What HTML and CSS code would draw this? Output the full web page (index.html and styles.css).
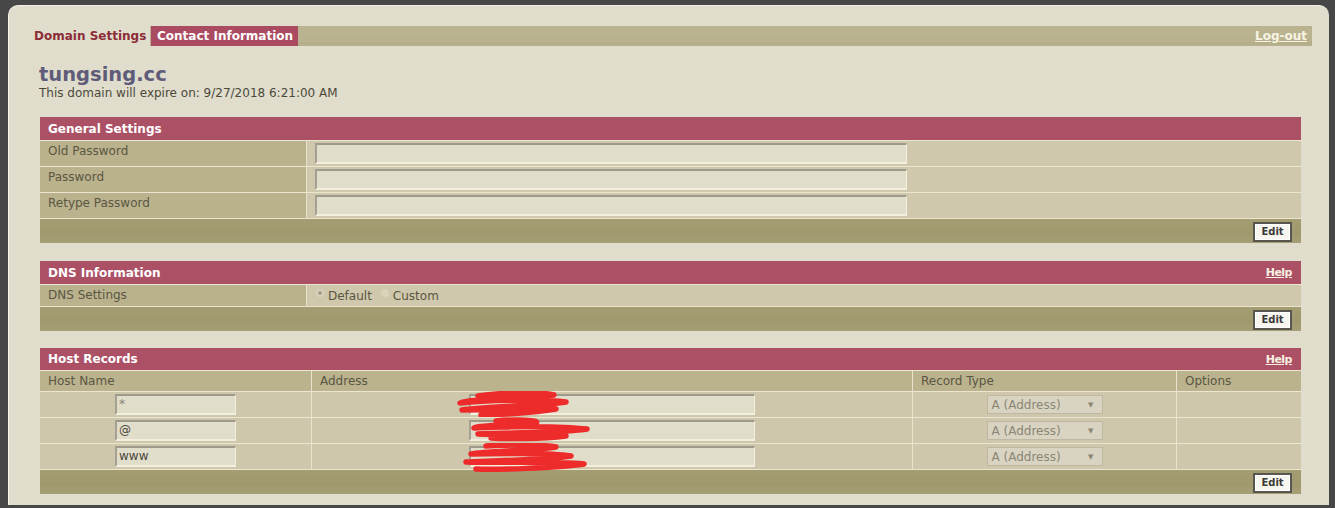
FILE: index.html
```html
<!DOCTYPE html>
<html>
<head>
<meta charset="utf-8">
<title>Domain Settings</title>
<link rel="stylesheet" href="styles.css">
</head>
<body>
<div class="page">
  <div class="tabbar">
    <span class="tab tab-active">Domain Settings</span>
    <span class="tab tab-pink">Contact Information</span>
    <a class="logout" href="#">Log-out</a>
  </div>

  <div class="domain">
    <div class="domain-name">tungsing.cc</div>
    <div class="domain-expire">This domain will expire on: 9/27/2018 6:21:00 AM</div>
  </div>

  <div class="section section-general">
    <div class="sec-head"><span>General Settings</span></div>
    <div class="form-row">
      <div class="label">Old Password</div>
      <div class="value"><span class="input input-wide"></span></div>
    </div>
    <div class="form-row">
      <div class="label">Password</div>
      <div class="value"><span class="input input-wide"></span></div>
    </div>
    <div class="form-row">
      <div class="label">Retype Password</div>
      <div class="value"><span class="input input-wide"></span></div>
    </div>
    <div class="sec-foot"><button class="btn">Edit</button></div>
  </div>

  <div class="section section-dns">
    <div class="sec-head"><span>DNS Information</span><a class="help" href="#">Help</a></div>
    <div class="form-row form-row-short">
      <div class="label">DNS Settings</div>
      <div class="value value-radio">
        <span class="radio radio-on"></span><span class="radio-label">Default</span>
        <span class="radio"></span><span class="radio-label">Custom</span>
      </div>
    </div>
    <div class="sec-foot"><button class="btn">Edit</button></div>
  </div>

  <div class="section section-hosts">
    <div class="sec-head"><span>Host Records</span><a class="help" href="#">Help</a></div>
    <div class="host-grid">
      <div class="hcell hhead">Host Name</div>
      <div class="hcell hhead">Address</div>
      <div class="hcell hhead">Record Type</div>
      <div class="hcell hhead">Options</div>

      <div class="hcell hdata"><span class="input input-host input-star">*</span></div>
      <div class="hcell hdata addr">
        <span class="input input-addr"></span>
        <svg class="scribble" width="140" height="30" viewBox="0 0 140 30">
          <path d="M22 5 C50 1 85 1 98 4 C70 7 20 7 4 12 C30 9 90 8 110 11 C85 15 30 15 6 19 C40 18 80 18 100 18 C75 22 40 24 25 24" fill="none" stroke="#ee2b2b" stroke-width="5.5" stroke-linecap="round" stroke-linejoin="round"/>
        </svg>
      </div>
      <div class="hcell hdata"><div class="select"><span>A (Address)</span><span class="arrow">▼</span></div></div>
      <div class="hcell hdata"></div>

      <div class="hcell hdata"><span class="input input-host">@</span></div>
      <div class="hcell hdata addr">
        <span class="input input-addr"></span>
        <svg class="scribble" width="140" height="30" viewBox="0 0 140 30">
          <path d="M40 4 C60 2 85 3 80 6 C55 8 25 8 18 11 C50 9 105 9 131 12 C105 16 50 16 22 17 C55 18 100 17 110 19 C85 22 50 22 35 21" fill="none" stroke="#ee2b2b" stroke-width="5.5" stroke-linecap="round" stroke-linejoin="round"/>
        </svg>
      </div>
      <div class="hcell hdata"><div class="select"><span>A (Address)</span><span class="arrow">▼</span></div></div>
      <div class="hcell hdata"></div>

      <div class="hcell hdata"><span class="input input-host">www</span></div>
      <div class="hcell hdata addr">
        <span class="input input-addr"></span>
        <svg class="scribble" width="140" height="30" viewBox="0 0 140 30">
          <path d="M30 3 C55 1 90 2 100 4 C75 8 30 8 15 11 C45 10 95 10 115 13 C90 17 30 18 10 19 C50 20 100 18 128 21 C100 25 40 27 20 26" fill="none" stroke="#ee2b2b" stroke-width="5.5" stroke-linecap="round" stroke-linejoin="round"/>
        </svg>
      </div>
      <div class="hcell hdata"><div class="select"><span>A (Address)</span><span class="arrow">▼</span></div></div>
      <div class="hcell hdata"></div>
    </div>
    <div class="sec-foot"><button class="btn">Edit</button></div>
  </div>
</div>
</body>
</html>
```

FILE: styles.css
```css
html, body {
  margin: 0;
  padding: 0;
}
body {
  background: #474747;
  font-family: "DejaVu Sans", Verdana, sans-serif;
  font-size: 12px;
  color: #5a5642;
  padding-top: 5px;
  height: 508px;
  box-sizing: border-box;
  overflow: hidden;
}
.page {
  margin: 0 6px 0 8px;
  height: 500px;
  box-sizing: border-box;
  background: #e0ddcc;
  border-top: 1px solid #f3f1e6;
  border-left: 1px solid #f6f4ea;
  border-radius: 10px 10px 0 0;
  padding: 20px 17px 0 19px;
  overflow: hidden;
}

/* tab bar */
.tabbar {
  display: flex;
  align-items: stretch;
  height: 20px;
  background: linear-gradient(#bab38f 0, #bab38f 13px, #b4ad89 14px, #bcb592 15px, #b3ac88 17px, #b8b18d 20px);
}
.tab {
  display: flex;
  align-items: center;
  font-weight: bold;
  font-size: 12px;
  line-height: 14px;
}
.tab-active {
  width: 116px;
  padding-left: 6px;
  background: #e0ddcc;
  color: #8b2c37;
}
.tab-pink {
  margin-left: 1px;
  width: 141px;
  padding-left: 6px;
  background: #ab4b62;
  color: #ffffff;
}
.logout {
  margin-left: auto;
  padding-right: 5px;
  align-self: center;
  font-weight: bold;
  font-size: 12px;
  color: #f7f3e2;
  text-decoration: underline;
}

/* domain heading */
.domain {
  margin-left: 11px;
  margin-top: 18px;
}
.domain-name {
  font-weight: bold;
  font-size: 19.5px;
  line-height: 22px;
  color: #5f5c7a;
}
.domain-expire {
  line-height: 14px;
  color: #4c493b;
}

/* sections */
.section {
  margin: 0 11px 0 12px;
}
.section-general { margin-top: 17px; }
.section-dns { margin-top: 18px; }
.section-hosts { margin-top: 17px; }

.sec-head {
  display: flex;
  align-items: center;
  justify-content: space-between;
  height: 23px;
  padding: 0 9px 0 8px;
  background: #ac5066;
  color: #ffffff;
  font-weight: bold;
  font-size: 12px;
}
.section-hosts .sec-head { height: 22px; }
.help {
  color: #f7f0e2;
  text-decoration: underline;
  font-weight: bold;
  font-size: 11px;
  letter-spacing: -0.5px;
}

.form-row {
  display: grid;
  grid-template-columns: 267px 1fr;
  height: 26px;
  box-sizing: border-box;
  border-top: 1px solid #ebe6cf;
}
.form-row-short { height: 22px; }
.label {
  background: #bab28d;
  border-right: 1px solid #e6e1c8;
  padding: 3px 0 0 8px;
  line-height: 15px;
}
.value {
  background: #cfc8ad;
  padding: 2px 0 0 8px;
}
.value-radio {
  display: flex;
  align-items: center;
  padding: 0 0 0 9px;
  color: #5a5642;
  font-size: 12px;
}
.radio {
  width: 8px;
  height: 8px;
  border-radius: 50%;
  background: #d9d3bb;
  margin-top: -5px;
  display: flex;
  align-items: center;
  justify-content: center;
}
.radio-on::after {
  content: "";
  width: 4px;
  height: 4px;
  border-radius: 50%;
  background: #a39e8c;
}
.radio-label {
  margin: 0 9px 0 4px;
}

.input {
  display: block;
  box-sizing: border-box;
  height: 21px;
  background: #e1ddcb;
  border-top: 2px solid #9d9a8b;
  border-left: 2px solid #a4a192;
  border-right: 1px solid #f3efdf;
  border-bottom: 2px solid #f3efdf;
  font-size: 12px;
  line-height: 16px;
  padding-left: 1px;
  color: #4b483d;
}
.input-wide { width: 592px; }

.sec-foot {
  display: flex;
  justify-content: flex-end;
  align-items: center;
  height: 25px;
  box-sizing: border-box;
  border-top: 1px solid #ebe6cf;
  background: linear-gradient(#a59d72, #a1996e 60%, #a69e75);
  padding: 1px 9px 0 0;
}
.btn {
  width: 39px;
  height: 20px;
  box-sizing: border-box;
  padding: 0;
  background: #f6f5ef;
  border: 2px solid #58574f;
  box-shadow: inset 0 0 0 1px #ffffff;
  font-family: "DejaVu Sans", Verdana, sans-serif;
  font-weight: bold;
  font-size: 10px;
  color: #3a3a36;
}

/* host records */
.host-grid {
  display: grid;
  grid-template-columns: 272px 601px 264px 1fr;
}
.hcell {
  box-sizing: border-box;
  border-top: 1px solid #ebe6cf;
  border-right: 1px solid #e8e3ca;
}
.hcell:nth-child(4n) { border-right: none; }
.hhead {
  height: 21px;
  background: #bbb38e;
  padding: 3px 0 0 8px;
  line-height: 14px;
  font-size: 12px;
}
.hdata {
  height: 26px;
  background: #cec7ac;
  display: flex;
  justify-content: center;
  padding-top: 2px;
}
.input-host {
  width: 121px;
  padding-left: 2px;
}
.input-star { color: #8a8676; }
.input-addr { width: 286px; }
.addr { position: relative; }
.scribble {
  position: absolute;
  left: 144px;
  top: -1px;
}
.select {
  box-sizing: border-box;
  width: 116px;
  height: 19px;
  margin-top: 1px;
  border: 1px solid #beb8a2;
  background: #d9d4c1;
  color: #8a8676;
  font-size: 12px;
  display: flex;
  align-items: center;
  justify-content: space-between;
  padding: 0 8px 0 4px;
}
.arrow {
  font-size: 7px;
  color: #8a8676;
}
```
